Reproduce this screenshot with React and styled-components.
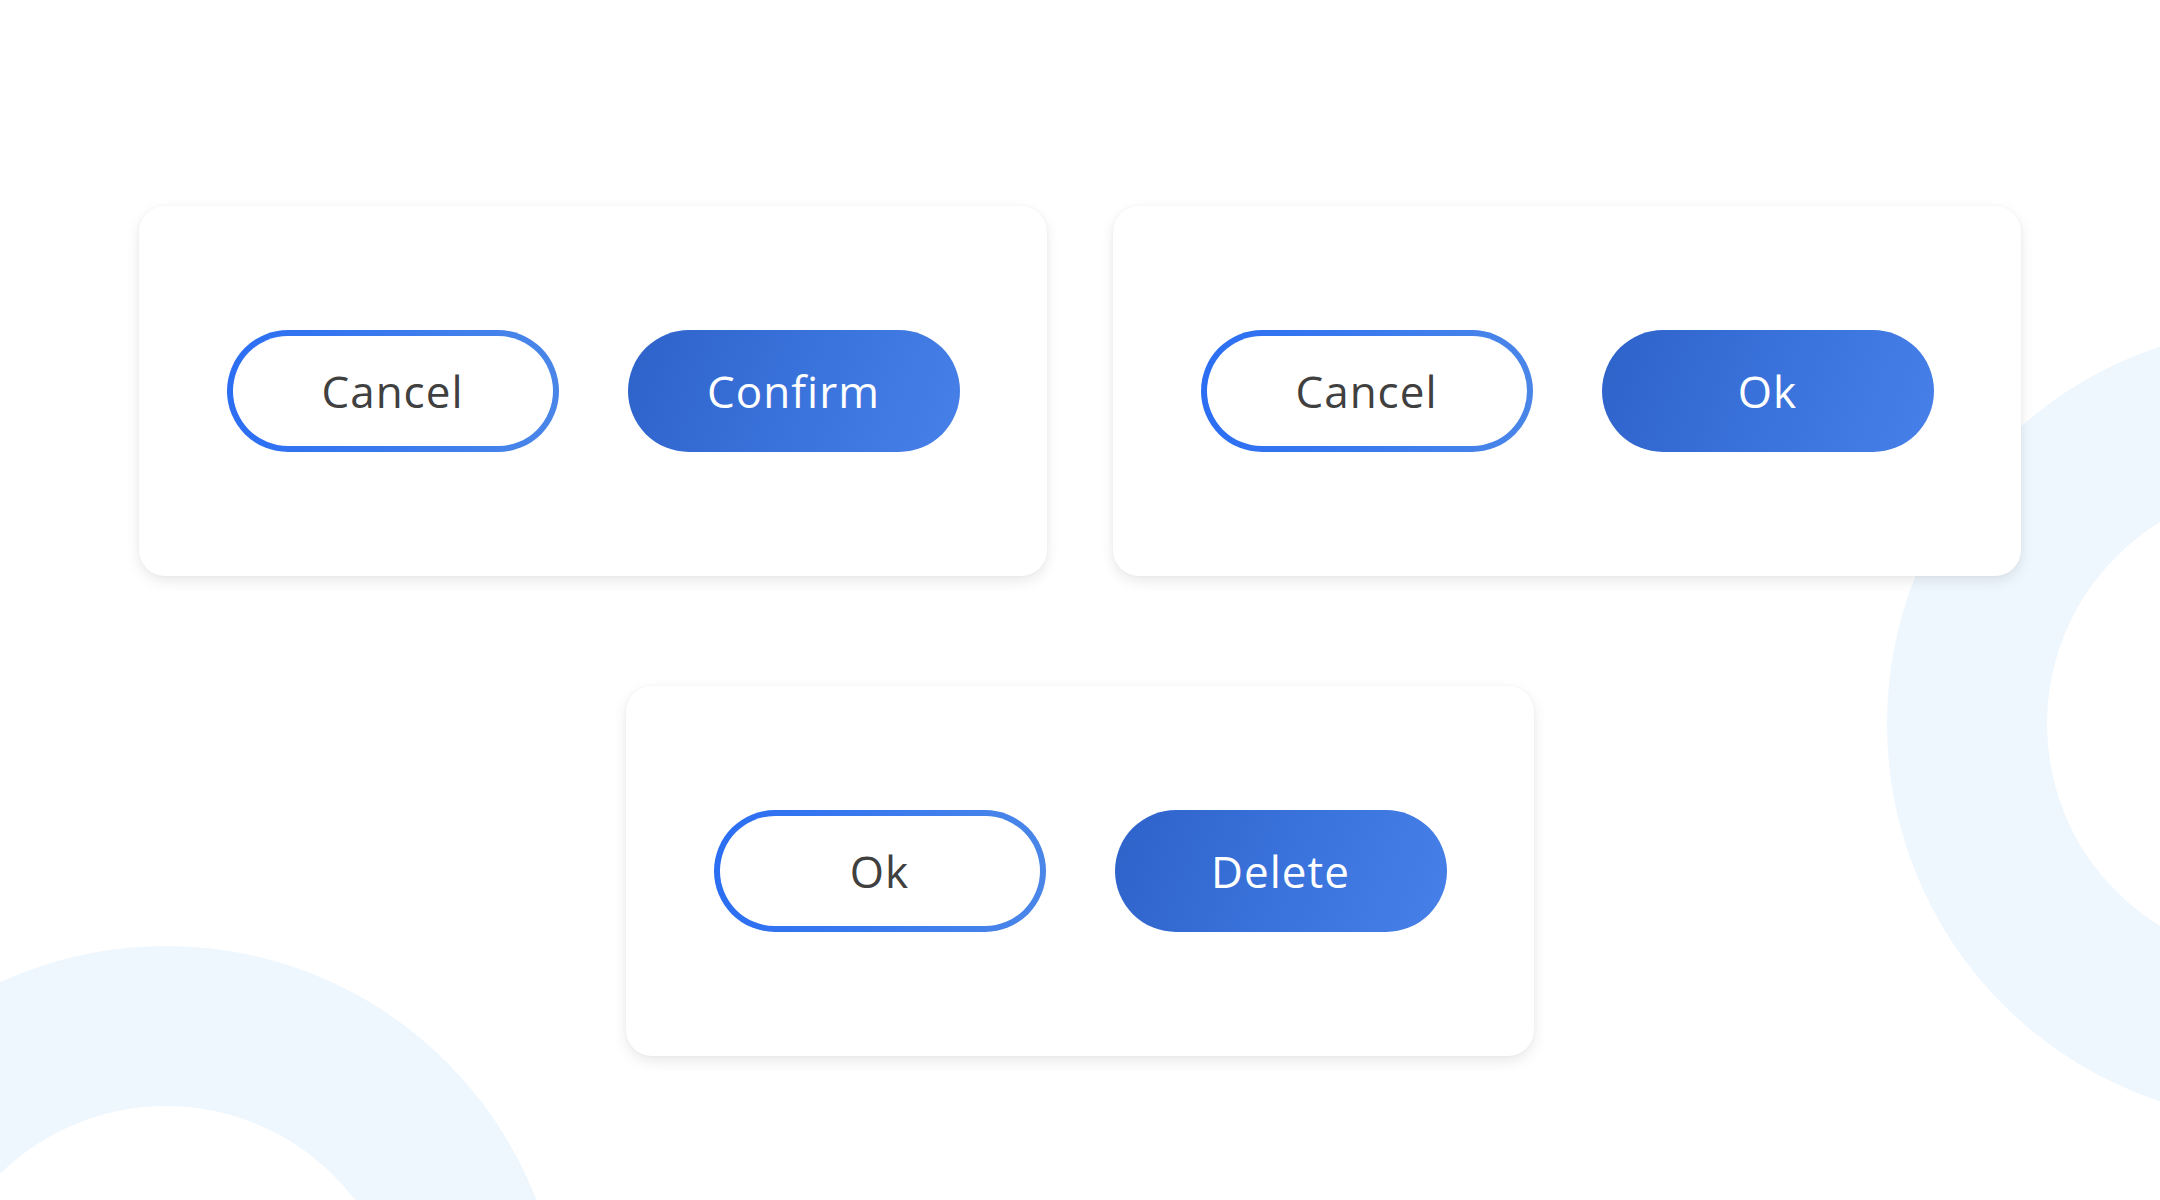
import React from 'react'
import styled, { createGlobalStyle } from 'styled-components'

const GlobalStyle = createGlobalStyle`
  * { box-sizing: border-box; }
  html, body {
    margin: 0;
    padding: 0;
    background: #ffffff;
  }
`

const Page = styled.div`
  position: relative;
  width: 100%;
  height: 1200px;
  overflow: hidden;
  display: flex;
  flex-direction: column;
  align-items: center;
  padding-top: 206px;
  gap: 110px;
  font-family: 'Open Sans', 'Liberation Sans', sans-serif;
`

const Ring = styled.div`
  position: absolute;
  left: ${(p) => p.$left}px;
  top: ${(p) => p.$top}px;
  width: 794px;
  height: 794px;
  border-radius: 50%;
  border: 160px solid #eef6fe;
  z-index: 0;
`

const Row = styled.div`
  display: flex;
  gap: 66px;
  position: relative;
  z-index: 1;
`

const Card = styled.div`
  width: 908px;
  height: 370px;
  background: #ffffff;
  border-radius: 26px;
  box-shadow: 0 5px 14px rgba(0, 0, 0, 0.09), 0 0 4px rgba(0, 0, 0, 0.03);
  display: flex;
  align-items: center;
  justify-content: center;
  gap: 69px;
`

const Button = styled.button`
  width: 332px;
  height: 122px;
  border-radius: 61px;
  font-family: inherit;
  font-size: 44px;
  font-weight: 400;
  letter-spacing: 1px;
  display: flex;
  align-items: center;
  justify-content: center;
  padding: 0;
  cursor: pointer;
  border: 6px solid transparent;
  color: ${(p) => (p.$primary ? '#ffffff' : '#404040')};
  background: ${(p) => (p.$primary
    ? 'linear-gradient(110deg, #2d62c9 0%, #3a72db 50%, #4680e8 100%)'
    : 'linear-gradient(#fff, #fff) padding-box, linear-gradient(90deg, #2b6ef3, #4a86e8) border-box')};
  ${(p) => p.$primary && 'border: none;'}
`

function ButtonPair({ left, right }) {
  return (
    <Card>
      <Button>{left}</Button>
      <Button $primary>{right}</Button>
    </Card>
  )
}

export default function App() {
  return (
    <>
      <GlobalStyle />
      <Page>
        <Ring $left={-231} $top={946} />
        <Ring $left={1887} $top={327} />
        <Row>
          <ButtonPair left="Cancel" right="Confirm" />
          <ButtonPair left="Cancel" right="Ok" />
        </Row>
        <Row>
          <ButtonPair left="Ok" right="Delete" />
        </Row>
      </Page>
    </>
  )
}
